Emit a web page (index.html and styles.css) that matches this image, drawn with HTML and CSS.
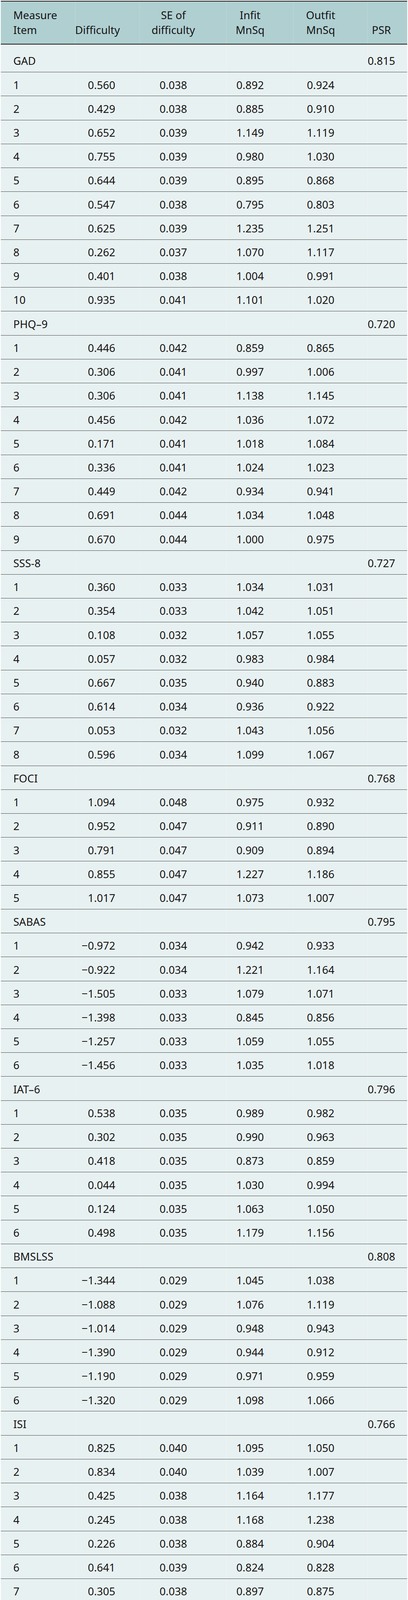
FILE: index.html
```html
<!DOCTYPE html>
<html lang="en">
<head>
<meta charset="utf-8">
<title>Rasch item statistics</title>
<link rel="stylesheet" href="styles.css">
</head>
<body>
<table class="stats">
  <colgroup>
    <col class="c-item"><col class="c-diff"><col class="c-se"><col class="c-infit"><col class="c-outfit"><col class="c-psr">
  </colgroup>
  <thead>
    <tr>
      <th class="item">Measure<br>Item</th>
      <th class="diff">Difficulty</th>
      <th class="num">SE of<br>difficulty</th>
      <th class="num">Infit<br>MnSq</th>
      <th class="num">Outfit<br>MnSq</th>
      <th class="psr">PSR</th>
    </tr>
  </thead>
  <tbody>
    <tr class="group first"><td class="item">GAD</td><td class="diff"></td><td class="num"></td><td class="num"></td><td class="num"></td><td class="psr">0.815</td></tr>
    <tr><td class="item">1</td><td class="diff">0.560</td><td class="num">0.038</td><td class="num">0.892</td><td class="num">0.924</td><td class="psr"></td></tr>
    <tr><td class="item">2</td><td class="diff">0.429</td><td class="num">0.038</td><td class="num">0.885</td><td class="num">0.910</td><td class="psr"></td></tr>
    <tr><td class="item">3</td><td class="diff">0.652</td><td class="num">0.039</td><td class="num">1.149</td><td class="num">1.119</td><td class="psr"></td></tr>
    <tr><td class="item">4</td><td class="diff">0.755</td><td class="num">0.039</td><td class="num">0.980</td><td class="num">1.030</td><td class="psr"></td></tr>
    <tr><td class="item">5</td><td class="diff">0.644</td><td class="num">0.039</td><td class="num">0.895</td><td class="num">0.868</td><td class="psr"></td></tr>
    <tr><td class="item">6</td><td class="diff">0.547</td><td class="num">0.038</td><td class="num">0.795</td><td class="num">0.803</td><td class="psr"></td></tr>
    <tr><td class="item">7</td><td class="diff">0.625</td><td class="num">0.039</td><td class="num">1.235</td><td class="num">1.251</td><td class="psr"></td></tr>
    <tr><td class="item">8</td><td class="diff">0.262</td><td class="num">0.037</td><td class="num">1.070</td><td class="num">1.117</td><td class="psr"></td></tr>
    <tr><td class="item">9</td><td class="diff">0.401</td><td class="num">0.038</td><td class="num">1.004</td><td class="num">0.991</td><td class="psr"></td></tr>
    <tr><td class="item">10</td><td class="diff">0.935</td><td class="num">0.041</td><td class="num">1.101</td><td class="num">1.020</td><td class="psr"></td></tr>

    <tr class="group"><td class="item">PHQ–9</td><td class="diff"></td><td class="num"></td><td class="num"></td><td class="num"></td><td class="psr">0.720</td></tr>
    <tr><td class="item">1</td><td class="diff">0.446</td><td class="num">0.042</td><td class="num">0.859</td><td class="num">0.865</td><td class="psr"></td></tr>
    <tr><td class="item">2</td><td class="diff">0.306</td><td class="num">0.041</td><td class="num">0.997</td><td class="num">1.006</td><td class="psr"></td></tr>
    <tr><td class="item">3</td><td class="diff">0.306</td><td class="num">0.041</td><td class="num">1.138</td><td class="num">1.145</td><td class="psr"></td></tr>
    <tr><td class="item">4</td><td class="diff">0.456</td><td class="num">0.042</td><td class="num">1.036</td><td class="num">1.072</td><td class="psr"></td></tr>
    <tr><td class="item">5</td><td class="diff">0.171</td><td class="num">0.041</td><td class="num">1.018</td><td class="num">1.084</td><td class="psr"></td></tr>
    <tr><td class="item">6</td><td class="diff">0.336</td><td class="num">0.041</td><td class="num">1.024</td><td class="num">1.023</td><td class="psr"></td></tr>
    <tr><td class="item">7</td><td class="diff">0.449</td><td class="num">0.042</td><td class="num">0.934</td><td class="num">0.941</td><td class="psr"></td></tr>
    <tr><td class="item">8</td><td class="diff">0.691</td><td class="num">0.044</td><td class="num">1.034</td><td class="num">1.048</td><td class="psr"></td></tr>
    <tr><td class="item">9</td><td class="diff">0.670</td><td class="num">0.044</td><td class="num">1.000</td><td class="num">0.975</td><td class="psr"></td></tr>

    <tr class="group"><td class="item">SSS-8</td><td class="diff"></td><td class="num"></td><td class="num"></td><td class="num"></td><td class="psr">0.727</td></tr>
    <tr><td class="item">1</td><td class="diff">0.360</td><td class="num">0.033</td><td class="num">1.034</td><td class="num">1.031</td><td class="psr"></td></tr>
    <tr><td class="item">2</td><td class="diff">0.354</td><td class="num">0.033</td><td class="num">1.042</td><td class="num">1.051</td><td class="psr"></td></tr>
    <tr><td class="item">3</td><td class="diff">0.108</td><td class="num">0.032</td><td class="num">1.057</td><td class="num">1.055</td><td class="psr"></td></tr>
    <tr><td class="item">4</td><td class="diff">0.057</td><td class="num">0.032</td><td class="num">0.983</td><td class="num">0.984</td><td class="psr"></td></tr>
    <tr><td class="item">5</td><td class="diff">0.667</td><td class="num">0.035</td><td class="num">0.940</td><td class="num">0.883</td><td class="psr"></td></tr>
    <tr><td class="item">6</td><td class="diff">0.614</td><td class="num">0.034</td><td class="num">0.936</td><td class="num">0.922</td><td class="psr"></td></tr>
    <tr><td class="item">7</td><td class="diff">0.053</td><td class="num">0.032</td><td class="num">1.043</td><td class="num">1.056</td><td class="psr"></td></tr>
    <tr><td class="item">8</td><td class="diff">0.596</td><td class="num">0.034</td><td class="num">1.099</td><td class="num">1.067</td><td class="psr"></td></tr>

    <tr class="group"><td class="item">FOCI</td><td class="diff"></td><td class="num"></td><td class="num"></td><td class="num"></td><td class="psr">0.768</td></tr>
    <tr><td class="item">1</td><td class="diff">1.094</td><td class="num">0.048</td><td class="num">0.975</td><td class="num">0.932</td><td class="psr"></td></tr>
    <tr><td class="item">2</td><td class="diff">0.952</td><td class="num">0.047</td><td class="num">0.911</td><td class="num">0.890</td><td class="psr"></td></tr>
    <tr><td class="item">3</td><td class="diff">0.791</td><td class="num">0.047</td><td class="num">0.909</td><td class="num">0.894</td><td class="psr"></td></tr>
    <tr><td class="item">4</td><td class="diff">0.855</td><td class="num">0.047</td><td class="num">1.227</td><td class="num">1.186</td><td class="psr"></td></tr>
    <tr><td class="item">5</td><td class="diff">1.017</td><td class="num">0.047</td><td class="num">1.073</td><td class="num">1.007</td><td class="psr"></td></tr>

    <tr class="group"><td class="item">SABAS</td><td class="diff"></td><td class="num"></td><td class="num"></td><td class="num"></td><td class="psr">0.795</td></tr>
    <tr><td class="item">1</td><td class="diff">−0.972</td><td class="num">0.034</td><td class="num">0.942</td><td class="num">0.933</td><td class="psr"></td></tr>
    <tr><td class="item">2</td><td class="diff">−0.922</td><td class="num">0.034</td><td class="num">1.221</td><td class="num">1.164</td><td class="psr"></td></tr>
    <tr><td class="item">3</td><td class="diff">−1.505</td><td class="num">0.033</td><td class="num">1.079</td><td class="num">1.071</td><td class="psr"></td></tr>
    <tr><td class="item">4</td><td class="diff">−1.398</td><td class="num">0.033</td><td class="num">0.845</td><td class="num">0.856</td><td class="psr"></td></tr>
    <tr><td class="item">5</td><td class="diff">−1.257</td><td class="num">0.033</td><td class="num">1.059</td><td class="num">1.055</td><td class="psr"></td></tr>
    <tr><td class="item">6</td><td class="diff">−1.456</td><td class="num">0.033</td><td class="num">1.035</td><td class="num">1.018</td><td class="psr"></td></tr>

    <tr class="group"><td class="item">IAT–6</td><td class="diff"></td><td class="num"></td><td class="num"></td><td class="num"></td><td class="psr">0.796</td></tr>
    <tr><td class="item">1</td><td class="diff">0.538</td><td class="num">0.035</td><td class="num">0.989</td><td class="num">0.982</td><td class="psr"></td></tr>
    <tr><td class="item">2</td><td class="diff">0.302</td><td class="num">0.035</td><td class="num">0.990</td><td class="num">0.963</td><td class="psr"></td></tr>
    <tr><td class="item">3</td><td class="diff">0.418</td><td class="num">0.035</td><td class="num">0.873</td><td class="num">0.859</td><td class="psr"></td></tr>
    <tr><td class="item">4</td><td class="diff">0.044</td><td class="num">0.035</td><td class="num">1.030</td><td class="num">0.994</td><td class="psr"></td></tr>
    <tr><td class="item">5</td><td class="diff">0.124</td><td class="num">0.035</td><td class="num">1.063</td><td class="num">1.050</td><td class="psr"></td></tr>
    <tr><td class="item">6</td><td class="diff">0.498</td><td class="num">0.035</td><td class="num">1.179</td><td class="num">1.156</td><td class="psr"></td></tr>

    <tr class="group"><td class="item">BMSLSS</td><td class="diff"></td><td class="num"></td><td class="num"></td><td class="num"></td><td class="psr">0.808</td></tr>
    <tr><td class="item">1</td><td class="diff">−1.344</td><td class="num">0.029</td><td class="num">1.045</td><td class="num">1.038</td><td class="psr"></td></tr>
    <tr><td class="item">2</td><td class="diff">−1.088</td><td class="num">0.029</td><td class="num">1.076</td><td class="num">1.119</td><td class="psr"></td></tr>
    <tr><td class="item">3</td><td class="diff">−1.014</td><td class="num">0.029</td><td class="num">0.948</td><td class="num">0.943</td><td class="psr"></td></tr>
    <tr><td class="item">4</td><td class="diff">−1.390</td><td class="num">0.029</td><td class="num">0.944</td><td class="num">0.912</td><td class="psr"></td></tr>
    <tr><td class="item">5</td><td class="diff">−1.190</td><td class="num">0.029</td><td class="num">0.971</td><td class="num">0.959</td><td class="psr"></td></tr>
    <tr><td class="item">6</td><td class="diff">−1.320</td><td class="num">0.029</td><td class="num">1.098</td><td class="num">1.066</td><td class="psr"></td></tr>

    <tr class="group"><td class="item">ISI</td><td class="diff"></td><td class="num"></td><td class="num"></td><td class="num"></td><td class="psr">0.766</td></tr>
    <tr><td class="item">1</td><td class="diff">0.825</td><td class="num">0.040</td><td class="num">1.095</td><td class="num">1.050</td><td class="psr"></td></tr>
    <tr><td class="item">2</td><td class="diff">0.834</td><td class="num">0.040</td><td class="num">1.039</td><td class="num">1.007</td><td class="psr"></td></tr>
    <tr><td class="item">3</td><td class="diff">0.425</td><td class="num">0.038</td><td class="num">1.164</td><td class="num">1.177</td><td class="psr"></td></tr>
    <tr><td class="item">4</td><td class="diff">0.245</td><td class="num">0.038</td><td class="num">1.168</td><td class="num">1.238</td><td class="psr"></td></tr>
    <tr><td class="item">5</td><td class="diff">0.226</td><td class="num">0.038</td><td class="num">0.884</td><td class="num">0.904</td><td class="psr"></td></tr>
    <tr><td class="item">6</td><td class="diff">0.641</td><td class="num">0.039</td><td class="num">0.824</td><td class="num">0.828</td><td class="psr"></td></tr>
    <tr class="last"><td class="item">7</td><td class="diff">0.305</td><td class="num">0.038</td><td class="num">0.897</td><td class="num">0.875</td><td class="psr"></td></tr>
  </tbody>
</table>
</body>
</html>
```

FILE: styles.css
```css
html, body {
  margin: 0;
  padding: 0;
  background: #ffffff;
}

.stats {
  margin: 2px 0 0 2px;
  width: 1040px;
  table-layout: fixed;
  border-collapse: separate;
  border-spacing: 0;
  font-family: "Noto Sans", "Open Sans", "Liberation Sans", sans-serif;
  font-size: 27.5px;
  line-height: 38px;
  color: #141414;
}

.c-item { width: 190px; }
.c-diff { width: 165px; }
.c-se { width: 222px; }
.c-infit { width: 171px; }
.c-outfit { width: 190px; }
.c-psr { width: 102px; }

.stats th,
.stats td {
  padding: 13.3px 49px 8.93px 0;
  border-bottom: 1px solid #4a4a4a;
  white-space: nowrap;
  box-shadow: inset 1px 0 0 rgba(255, 255, 255, 0.18);
}

.stats th {
  background: #b0cfd1;
  font-weight: normal;
  vertical-align: bottom;
  padding-top: 16.3px;
  padding-bottom: 15.7px;
  border-top: 2px solid #1a1a1a;
  border-bottom: 2px solid #1a1a1a;
  text-align: center;
}

.stats td {
  background: #e8f1f1;
  vertical-align: top;
}

.stats .item {
  text-align: left;
  padding-left: 32px;
  padding-right: 0;
  box-shadow: none;
}

.stats td.diff {
  text-align: right;
  padding-right: 62px;
}

.stats th.diff {
  text-align: center;
  padding-right: 50px;
}

.stats .num {
  text-align: center;
}

.stats .psr {
  text-align: center;
  padding-right: 30px;
}

.stats tr.first td {
  padding-top: 23.3px;
}

.stats tr.last td {
  padding-bottom: 7.93px;
  border-bottom: 2px solid #1a1a1a;
}
```
